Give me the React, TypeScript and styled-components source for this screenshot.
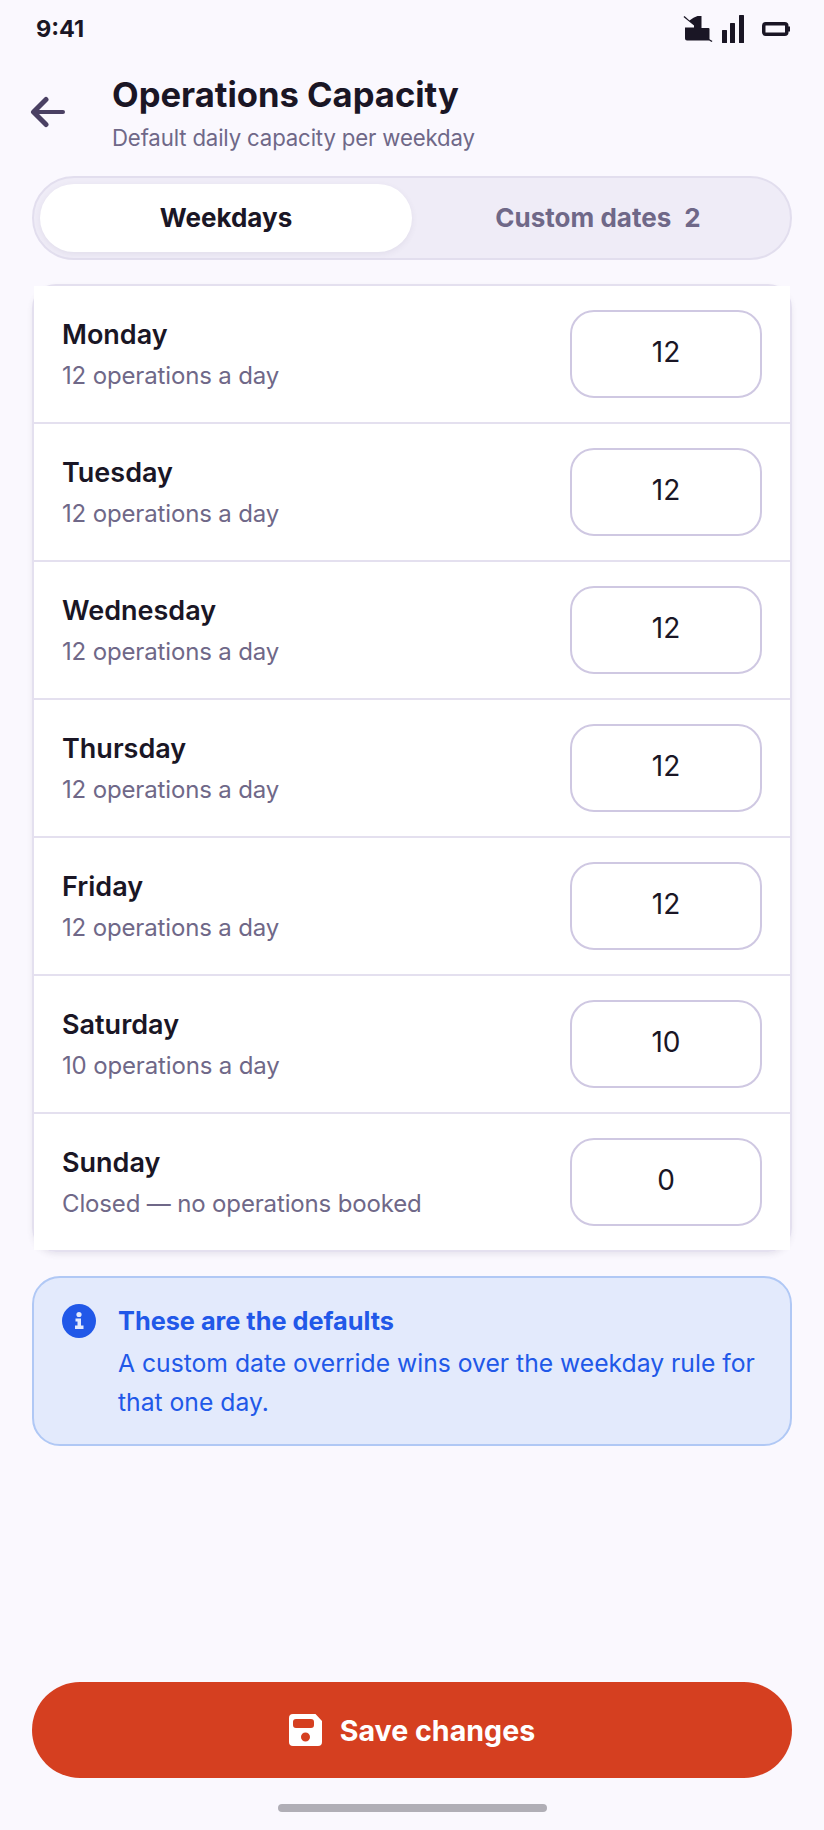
import { createGlobalStyle, styled } from "styled-components";

const GlobalStyle = createGlobalStyle`
  html, body {
    margin: 0;
    padding: 0;
    background: #faf8fe;
  }
  * {
    box-sizing: border-box;
  }
  body {
    font-family: Inter, "Liberation Sans", sans-serif;
  }
`;

const Page = styled.div`
  width: 824px;
  height: 1830px;
  display: flex;
  flex-direction: column;
  background: #faf8fe;
  color: #1a1625;
`;

const StatusBar = styled.div`
  height: 56px;
  padding: 0 34px 0 36px;
  display: flex;
  align-items: center;
  justify-content: space-between;
`;

const Clock = styled.span`
  font-size: 23.5px;
  font-weight: 700;
`;

const StatusIcons = styled.div`
  padding-top: 2px;
  display: flex;
  align-items: center;
  gap: 9px;
`;

const BatteryIcon = styled.svg`
  margin-left: 9px;
`;

const Header = styled.header`
  display: flex;
  align-items: flex-start;
  height: 120px;
  padding: 16px 32px 0 30px;
  gap: 46px;
`;

const BackButton = styled.button`
  margin-top: 24px;
  border: none;
  background: none;
  padding: 0;
  width: 36px;
  height: 32px;
  display: flex;
  color: #4a4063;
`;

const Title = styled.h1`
  margin: 0;
  font-size: 34.6px;
  line-height: 44px;
  font-weight: 700;
`;

const Subtitle = styled.p`
  margin: 6px 0 0;
  font-size: 22.2px;
  line-height: 32px;
  letter-spacing: -0.15px;
  color: #6f6888;
`;

const Tabs = styled.div`
  height: 84px;
  margin: 0 32px;
  padding: 6px;
  display: grid;
  grid-template-columns: 1fr 1fr;
  background: #efecf7;
  border: 2px solid #e2deee;
  border-radius: 42px;
`;

const Tab = styled.div<{ $active?: boolean }>`
  padding-bottom: 2px;
  display: flex;
  align-items: center;
  justify-content: center;
  gap: 13px;
  font-size: 26px;
  font-weight: 700;
  border-radius: 34px;
  color: ${(p) => (p.$active ? "#1a1625" : "#6f6888")};
  background: ${(p) => (p.$active ? "#ffffff" : "transparent")};
  box-shadow: ${(p) => (p.$active ? "0 2px 6px rgba(74, 64, 99, 0.08)" : "none")};
`;

const Card = styled.div`
  margin: 24px 32px 0;
  border: 2px solid #e4e0ef;
  border-radius: 24px;
  box-shadow: 0 3px 6px -1px rgba(74, 64, 99, 0.12);
`;

const Row = styled.div`
  height: 138px;
  padding: 24px 28px;
  display: flex;
  align-items: center;
  justify-content: space-between;
  background: #ffffff;
  border-bottom: 2px solid #e4e0ef;

  &:last-child {
    height: 136px;
    border-bottom: none;
  }
`;

const DayText = styled.div`
  padding-top: 2px;
`;

const DayName = styled.div`
  font-size: 27px;
  line-height: 38px;
  font-weight: 600;
`;

const DayNote = styled.div`
  margin-top: 4px;
  font-size: 24px;
  line-height: 36px;
  letter-spacing: -0.15px;
  color: #6f6888;
`;

const CapacityInput = styled.input`
  width: 192px;
  height: 88px;
  padding: 0 0 4px;
  border: 2px solid #cfc8e2;
  border-radius: 24px;
  background: #ffffff;
  color: #1a1625;
  font-family: inherit;
  font-size: 28px;
  text-align: center;
  outline: none;
`;

const InfoBox = styled.div`
  margin: 24px 32px 0;
  height: 170px;
  padding: 25px 28px;
  display: flex;
  gap: 22px;
  background: #e3eafc;
  border: 2px solid #b0c8f5;
  border-radius: 28px;
  color: #2158e8;
`;

const InfoIcon = styled.svg`
  flex: none;
  margin-top: 1px;
`;

const InfoTitle = styled.div`
  font-size: 25.3px;
  line-height: 36px;
  font-weight: 700;
`;

const InfoBody = styled.div`
  margin-top: 5px;
  font-size: 24.7px;
  line-height: 39px;
`;

const Footer = styled.div`
  margin-top: auto;
  padding: 0 32px;
  display: flex;
  flex-direction: column;
  align-items: center;
`;

const SaveButton = styled.button`
  width: 100%;
  height: 96px;
  border: none;
  border-radius: 48px;
  background: #d53f20;
  color: #ffffff;
  font-family: inherit;
  font-size: 28.6px;
  font-weight: 700;
  display: flex;
  align-items: center;
  justify-content: center;
  gap: 18px;
`;

const HomeBar = styled.div`
  margin: 26px 0 18px;
  width: 269px;
  height: 8px;
  border-radius: 4px;
  background: #b0aeb6;
`;

const days = [
  { name: "Monday", value: 12 },
  { name: "Tuesday", value: 12 },
  { name: "Wednesday", value: 12 },
  { name: "Thursday", value: 12 },
  { name: "Friday", value: 12 },
  { name: "Saturday", value: 10 },
  { name: "Sunday", value: 0 },
];

export default function App() {
  return (
    <Page>
      <GlobalStyle />
      <StatusBar>
        <Clock>9:41</Clock>
        <StatusIcons>
          <svg width="30" height="26" viewBox="0 0 30 26" fill="#1a1625">
            <path d="M0.5 1l1-1 5 4.5q4-3.5 8-4.5h4v12h7q1 0 1 1v10.5q0 1-1 1H4q-2 0-2-2V11.5h9V9.5z" />
            <path d="M26 23l3.5 2-1 1-3-2z" />
          </svg>
          <svg width="22" height="28" viewBox="0 0 22 28" fill="#1a1625">
            <rect x="0" y="15" width="5" height="13" rx="0.5" />
            <rect x="8" y="8" width="5" height="20" rx="0.5" />
            <rect x="17" y="0" width="5" height="28" rx="0.5" />
          </svg>
          <BatteryIcon width="28" height="14" viewBox="0 0 28 14">
            <rect x="1.75" y="1.75" width="23" height="10.5" rx="2" fill="none" stroke="#1a1625" strokeWidth="3.5" />
            <rect x="26" y="4.5" width="2" height="5" fill="#1a1625" />
          </BatteryIcon>
        </StatusIcons>
      </StatusBar>
      <Header>
        <BackButton aria-label="Back">
          <svg width="36" height="32" viewBox="0 0 36 32" fill="none" stroke="currentColor" strokeLinecap="round" strokeLinejoin="round">
            <path d="M5 16H33" strokeWidth="4" />
            <path d="M16 3.5L3.5 16 16 28.5" strokeWidth="5" />
          </svg>
        </BackButton>
        <div>
          <Title>Operations Capacity</Title>
          <Subtitle>Default daily capacity per weekday</Subtitle>
        </div>
      </Header>
      <Tabs>
        <Tab $active>Weekdays</Tab>
        <Tab>
          Custom dates <span>2</span>
        </Tab>
      </Tabs>
      <Card>
        {days.map((d) => (
          <Row key={d.name}>
            <DayText>
              <DayName>{d.name}</DayName>
              <DayNote>
                {d.value === 0 ? "Closed — no operations booked" : `${d.value} operations a day`}
              </DayNote>
            </DayText>
            <CapacityInput defaultValue={d.value} />
          </Row>
        ))}
      </Card>
      <InfoBox>
        <InfoIcon width="34" height="34" viewBox="0 0 34 34">
          <circle cx="17" cy="17" r="17" fill="#2158e8" />
          <circle cx="17" cy="10.5" r="2.6" fill="#e3eafc" />
          <path d="M13.5 14.5h5.5v7h2.5v3.5h-8.5v-3.5h2.5v-4h-2z" fill="#e3eafc" />
        </InfoIcon>
        <div>
          <InfoTitle>These are the defaults</InfoTitle>
          <InfoBody>A custom date override wins over the weekday rule for that one day.</InfoBody>
        </div>
      </InfoBox>
      <Footer>
        <SaveButton>
          <svg width="33" height="32" viewBox="0 0 33 32" fill="#ffffff">
            <path fillRule="evenodd" d="M4 0h22.5l6.5 7v21q0 4-4 4H4q-4 0-4-4V4q0-4 4-4zM7 5q-3 0-3 3v3q0 3 3 3h15q3 0 3-3V8q0-3-3-3zM16.5 18.5a4.5 4.5 0 1 0 0 9a4.5 4.5 0 1 0 0-9z" />
          </svg>
          Save changes
        </SaveButton>
        <HomeBar />
      </Footer>
    </Page>
  );
}
